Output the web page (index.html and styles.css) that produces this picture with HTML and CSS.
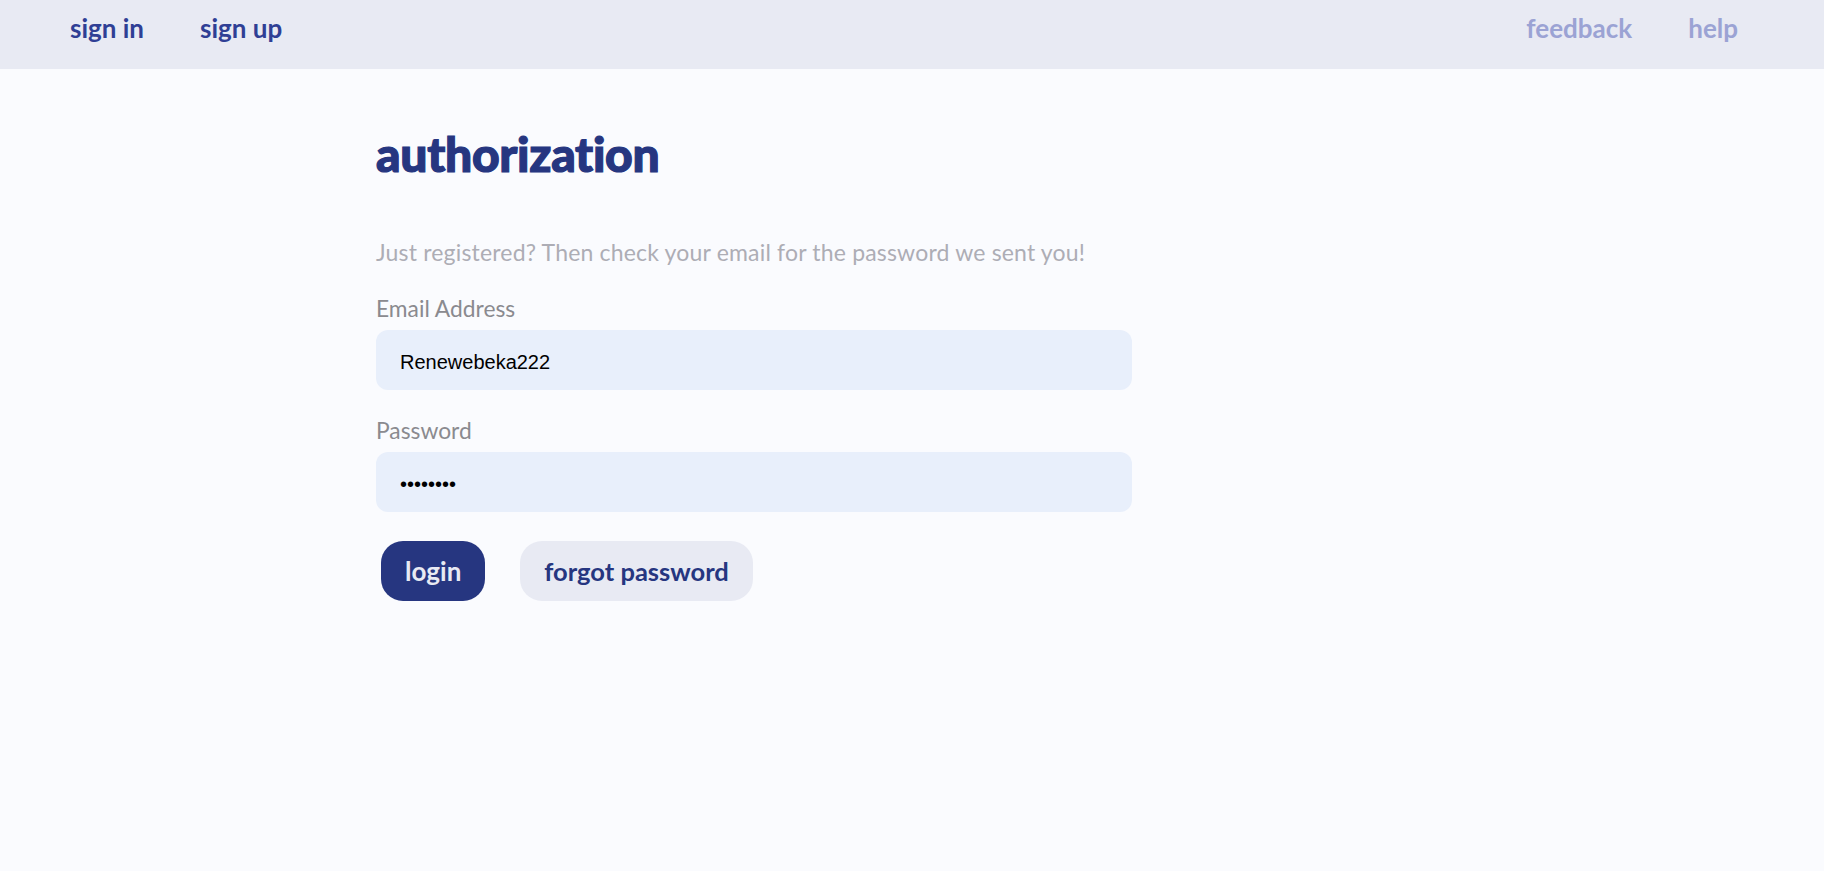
FILE: index.html
```html
<!DOCTYPE html>
<html lang="en">
<head>
<meta charset="utf-8">
<title>authorization</title>
<link rel="stylesheet" href="styles.css">
</head>
<body>
<header class="topbar">
  <nav class="nav nav-left">
    <a class="nav-link nav-link-primary" href="#">sign in</a>
    <a class="nav-link nav-link-primary" href="#">sign up</a>
  </nav>
  <nav class="nav nav-right">
    <a class="nav-link nav-link-muted" href="#">feedback</a>
    <a class="nav-link nav-link-muted" href="#">help</a>
  </nav>
</header>
<main class="content">
  <h1 class="title">authorization</h1>
  <p class="hint">Just registered? Then check your email for the password we sent you!</p>
  <form class="form">
    <label class="field-label" for="email">Email Address</label>
    <input class="field-input" id="email" type="text" value="Renewebeka222">
    <label class="field-label field-label-second" for="password">Password</label>
    <input class="field-input" id="password" type="password" value="12345678">
    <div class="actions">
      <button class="btn btn-primary" type="button">login</button>
      <button class="btn btn-secondary" type="button">forgot password</button>
    </div>
  </form>
</main>
</body>
</html>
```

FILE: styles.css
```css
html, body {
  margin: 0;
  padding: 0;
}
body {
  background: #fafbfe;
  font-family: "Lato", "Open Sans", sans-serif;
  min-height: 871px;
}
.topbar {
  height: 69px;
  background: #e8eaf3;
  display: flex;
  justify-content: space-between;
  align-items: center;
  padding: 0 86px 0 70px;
}
.nav {
  display: flex;
  align-items: center;
  gap: 56px;
}
.nav-link {
  font-size: 26px;
  font-weight: 700;
  text-decoration: none;
  line-height: 32px;
  margin-top: -14px;
}
.nav-link-primary {
  color: #2f3f95;
}
.nav-link-muted {
  color: #9ba3d4;
}
.content {
  padding: 61px 0 0 376px;
}
.title {
  margin: 0;
  font-size: 48px;
  line-height: 48px;
  font-weight: 900;
  color: #263680;
  letter-spacing: -0.3px;
  -webkit-text-stroke: 1.2px #263680;
}
.hint {
  margin: 60px 0 0 0;
  font-size: 23px;
  line-height: 28px;
  letter-spacing: 0.18px;
  color: #adadb5;
}
.form {
  display: flex;
  flex-direction: column;
  width: 756px;
  margin-top: 28px;
}
.field-label {
  font-size: 22.8px;
  line-height: 28px;
  color: #8a8a8f;
}
.field-label-second {
  margin-top: 26px;
}
.field-input {
  margin-top: 8px;
  height: 60px;
  box-sizing: border-box;
  border: none;
  outline: none;
  border-radius: 12px;
  background: #e8effb;
  padding: 4px 24px 0 24px;
  font-family: "Liberation Sans", Arial, sans-serif;
  font-size: 20px;
  color: #000;
}
.actions {
  display: flex;
  gap: 35px;
  margin-top: 29px;
  padding-left: 5px;
}
.btn {
  height: 60px;
  border: none;
  border-radius: 22px;
  padding: 0 24px;
  font-family: "Lato", "Open Sans", sans-serif;
  font-size: 26px;
  font-weight: 700;
  cursor: pointer;
}
.btn-primary {
  background: #263680;
  color: #e8eaf3;
}
.btn-secondary {
  background: #e8eaf3;
  color: #263680;
  font-size: 25.5px;
}
```
